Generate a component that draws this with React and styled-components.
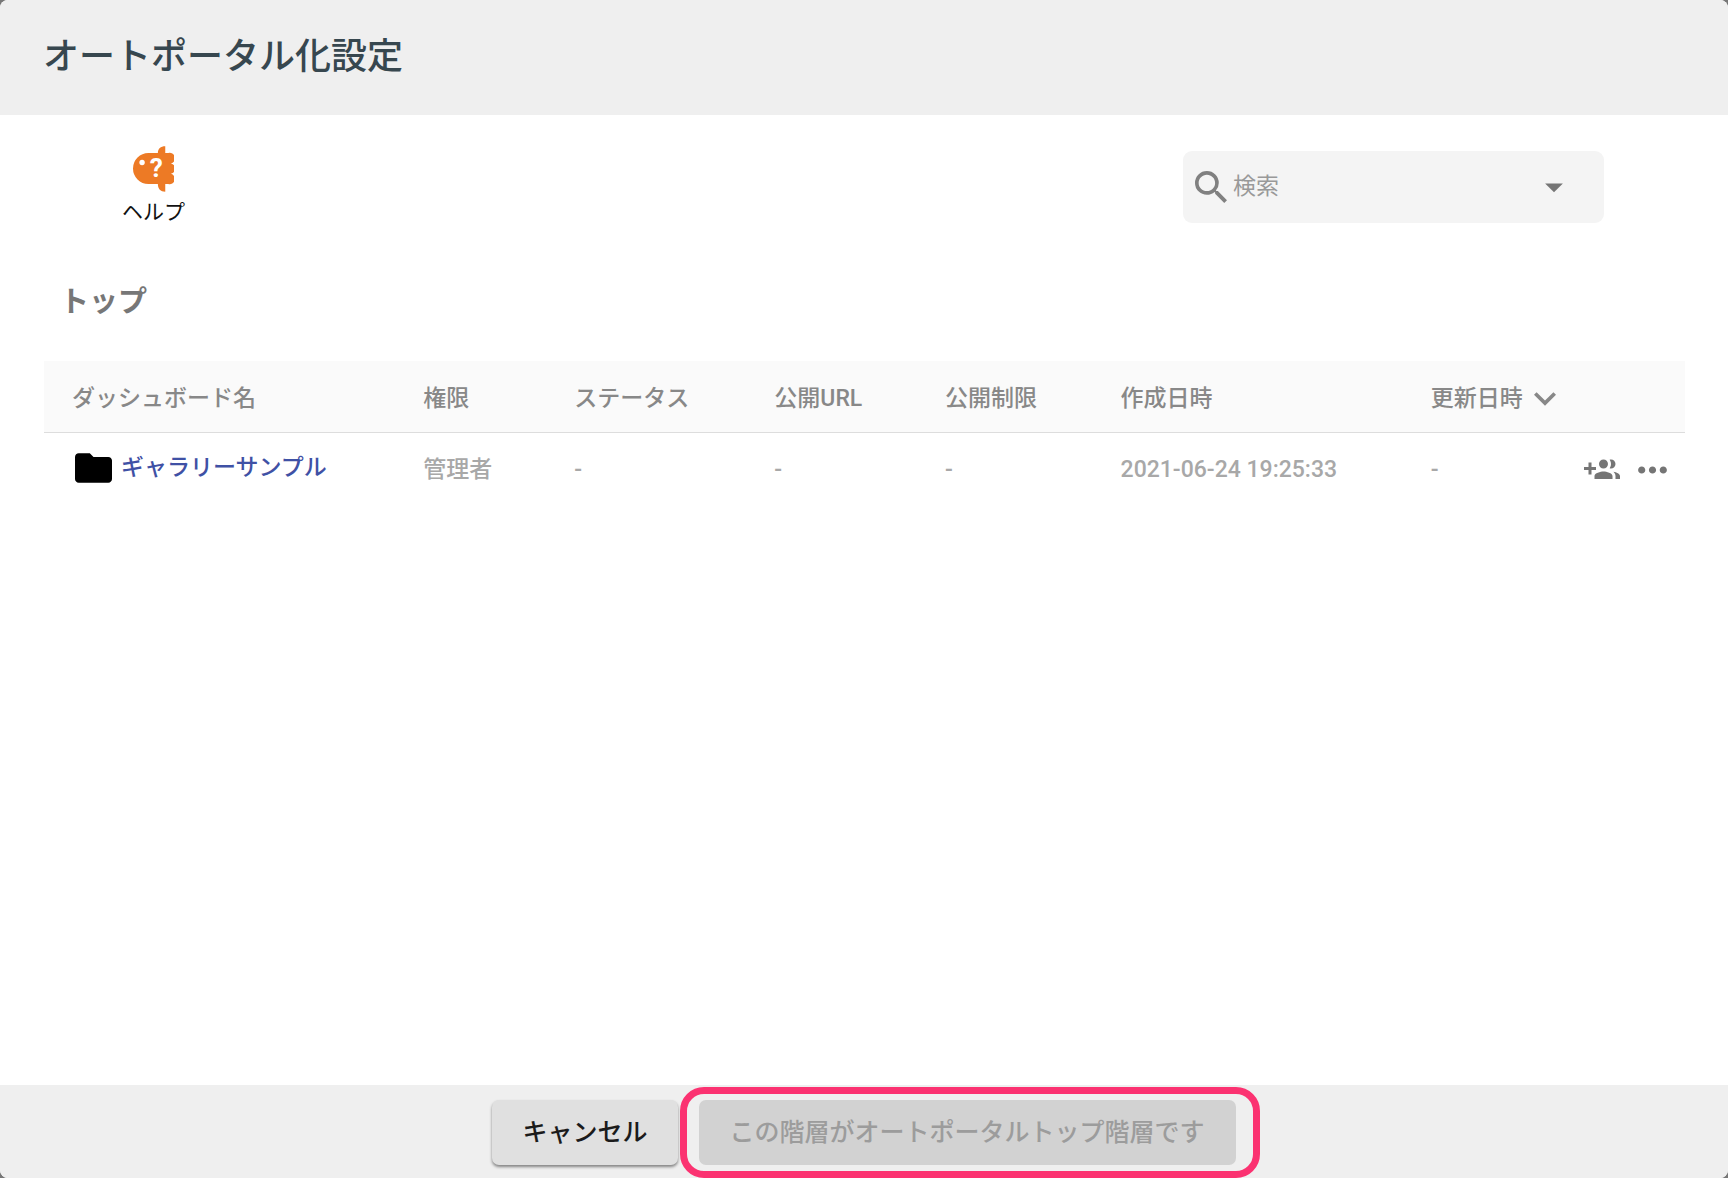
import React from "react";
import styled, { createGlobalStyle } from "styled-components";

const GlobalStyle = createGlobalStyle`
  *, *::before, *::after { box-sizing: border-box; }
  body {
    margin: 0;
    background: #777;
    font-family: Roboto, "Noto Sans CJK JP", sans-serif;
  }
  button, input { font: inherit; }
`;

const Dialog = styled.div`
  display: flex;
  flex-direction: column;
  min-height: 100vh;
  overflow: hidden;
  border-radius: 8px;
  background: #fff;
`;

const Header = styled.header`
  padding: 33px 43px 34px;
  background: #efefef;
`;

const Title = styled.h1`
  margin: 0;
  color: #37474f;
  font-size: 36px;
  font-weight: 500;
  line-height: 48px;
`;

const Content = styled.main`
  flex: 1;
  padding: 31px 43px 31px 44px;
`;

const Toolbar = styled.div`
  display: flex;
  align-items: flex-start;
  justify-content: space-between;
  padding: 0 81px 0 78px;
`;

const HelpLink = styled.a`
  display: flex;
  flex-direction: column;
  align-items: center;
  gap: 4px;
  color: #111;
  font-size: 21px;
  line-height: 32px;
  text-decoration: none;
`;

const SearchBox = styled.div`
  display: flex;
  align-items: center;
  width: 421px;
  height: 72px;
  margin-top: 5px;
  padding: 0 34px 0 12px;
  border-radius: 9px;
  background: #f4f4f4;
  color: #808080;
`;

const SearchLabel = styled.label`
  display: flex;
  flex: 1;
  align-items: center;
  gap: 6px;
  min-width: 0;
`;

const SearchInput = styled.input`
  flex: 1;
  min-width: 0;
  padding: 0;
  border: 0;
  outline: 0;
  background: none;
  color: #555;
  font-size: 23px;
  line-height: 32px;
  &::placeholder { color: #999; opacity: 1; }
`;

const IconButton = styled.button`
  display: inline-flex;
  align-items: center;
  justify-content: center;
  padding: 0;
  border: 0;
  background: none;
  color: ${(p) => p.$color || "#757575"};
  cursor: pointer;
`;

const Icon = styled.svg`
  display: block;
  flex: none;
  fill: currentColor;
`;

const Breadcrumb = styled.h2`
  margin: 56px 0 41px;
  padding: 0 16px;
  color: #777;
  font-size: 29px;
  font-weight: 700;
  line-height: 36px;
`;

const Table = styled.table`
  width: 100%;
  border-collapse: collapse;
  table-layout: fixed;
  font-size: 23px;
  font-weight: 500;
  line-height: 32px;
  text-align: left;
`;

const Col = styled.col`
  width: ${(p) => p.$width};
`;

const HeadCell = styled.th`
  height: 71px;
  padding: 6px 0 0 28px;
  border-bottom: 1px solid #ddd;
  background: #fafafa;
  color: #888;
  font-weight: 500;
  white-space: nowrap;
`;

const Cell = styled.td`
  height: 76px;
  padding: 0 0 0 28px;
  color: #a8a8a8;
  white-space: nowrap;
`;

const SortButton = styled(IconButton)`
  gap: 11px;
`;

const FolderLink = styled.a`
  display: flex;
  align-items: center;
  gap: 9px;
  padding: 0 0 4px 3px;
  color: #3f51a5;
  text-decoration: none;
`;

const Actions = styled.div`
  display: flex;
  justify-content: flex-end;
  gap: 18px;
  padding-right: 18px;
`;

const Footer = styled.footer`
  display: flex;
  justify-content: center;
  gap: 21px;
  padding: 15px 16px 13px;
  background: #efefef;
`;

const Button = styled.button`
  height: 65px;
  padding: 0 ${(p) => (p.$wide ? "31px" : "30px")};
  border: 0;
  border-radius: 7px;
  background: #e0e0e0;
  color: #1b1b1b;
  font-size: 25px;
  font-weight: 500;
  line-height: 36px;
  box-shadow: 0 2px 3px rgba(0, 0, 0, 0.45);
  cursor: pointer;
  &:disabled {
    background: #d2d2d2;
    color: #9c9c9c;
    box-shadow: none;
    cursor: default;
  }
`;

const Highlight = styled.div`
  position: relative;
  &::after {
    content: "";
    position: absolute;
    inset: -13px -24px -13px -19px;
    border: 7px solid #fb3271;
    border-radius: 24px;
    pointer-events: none;
  }
`;

const columns = [
  { label: "ダッシュボード名", width: "21.4%" },
  { label: "権限", width: "9.2%" },
  { label: "ステータス", width: "12.2%" },
  { label: "公開URL", width: "10.4%" },
  { label: "公開制限", width: "10.7%" },
  { label: "作成日時", width: "18.9%" },
];

const rows = [
  {
    name: "ギャラリーサンプル",
    role: "管理者",
    status: "-",
    url: "-",
    limit: "-",
    created: "2021-06-24 19:25:33",
    updated: "-",
  },
];

function HelpFish() {
  return (
    <Icon width="41" height="46" viewBox="0 0 122 135" aria-hidden="true">
      <path
        fill="#ed7a25"
        d="M46 20H74C74 8 82 0 96 0V20H105A15.500 15.500 0 0 1 113 51A16 16 0 0 1 113 82A15.500 15.500 0 0 1 105 112H96V135C82 135 74 126 74 112H46A46 46 0 0 1 46 20Z"
      />
      <circle cx="27" cy="48" r="8" fill="#fff" />
      <text x="69" y="92" fill="#fff" fontFamily="Roboto, sans-serif" fontSize="78" fontWeight="700" textAnchor="middle">
        ?
      </text>
    </Icon>
  );
}

export default function App() {
  return (
    <>
      <GlobalStyle />
      <Dialog role="dialog" aria-labelledby="dialog-title">
        <Header>
          <Title id="dialog-title">オートポータル化設定</Title>
        </Header>
        <Content>
          <Toolbar>
            <HelpLink href="#help">
              <HelpFish />
              ヘルプ
            </HelpLink>
            <SearchBox>
              <SearchLabel>
                <Icon width="32" height="32" viewBox="3 3 17.500 17.500" aria-hidden="true">
                  <path d="M15.500 14h-.79l-.28-.27A6.471 6.471 0 0 0 16 9.500 6.500 6.500 0 1 0 9.500 16c1.610 0 3.090-.59 4.230-1.570l.27.28v.79l5 4.990L20.490 19l-4.990-5zm-6 0C7.010 14 5 11.990 5 9.500S7.010 5 9.500 5 14 7.010 14 9.500 11.990 14 9.500 14z" />
                </Icon>
                <SearchInput type="text" placeholder="検索" aria-label="検索" />
              </SearchLabel>
              <IconButton type="button" aria-label="検索オプション">
                <Icon width="32" height="32" viewBox="3 3 18 18" aria-hidden="true">
                  <path d="M7 10l5 5 5-5z" />
                </Icon>
              </IconButton>
            </SearchBox>
          </Toolbar>
          <Breadcrumb>トップ</Breadcrumb>
          <Table>
            <colgroup>
              {columns.map((c) => (
                <Col key={c.label} $width={c.width} />
              ))}
              <Col $width="9%" />
              <Col />
            </colgroup>
            <thead>
              <tr>
                {columns.map((c) => (
                  <HeadCell key={c.label} scope="col">{c.label}</HeadCell>
                ))}
                <HeadCell scope="col" aria-sort="descending">
                  <SortButton type="button" $color="#888">
                    更新日時
                    <Icon width="22" height="14" viewBox="6 8.500 12 7.600" aria-hidden="true">
                      <path d="M16.590 8.590L12 13.170 7.410 8.590 6 10l6 6 6-6z" />
                    </Icon>
                  </SortButton>
                </HeadCell>
                <HeadCell as="td" />
              </tr>
            </thead>
            <tbody>
              {rows.map((r) => (
                <tr key={r.name}>
                  <Cell>
                    <FolderLink href="#folder">
                      <Icon width="37" height="30" viewBox="2 4 20 16" aria-hidden="true">
                        <path fill="#000" d="M10 4H4c-1.100 0-1.990.9-1.990 2L2 18c0 1.100.9 2 2 2h16c1.100 0 2-.9 2-2V8c0-1.100-.9-2-2-2h-8l-2-2z" />
                      </Icon>
                      {r.name}
                    </FolderLink>
                  </Cell>
                  <Cell>{r.role}</Cell>
                  <Cell>{r.status}</Cell>
                  <Cell>{r.url}</Cell>
                  <Cell>{r.limit}</Cell>
                  <Cell>{r.created}</Cell>
                  <Cell>{r.updated}</Cell>
                  <Cell>
                    <Actions>
                      <IconButton type="button" aria-label="共有">
                        <Icon width="36" height="36" viewBox="0 0 24 24" aria-hidden="true">
                          <path d="M8 10H5V7H3v3H0v2h3v3h2v-3h3v-2zm10 1c1.660 0 2.990-1.340 2.990-3S19.660 5 18 5c-.32 0-.63.05-.91.14.57.81.9 1.790.9 2.860s-.34 2.040-.9 2.860c.28.09.59.14.91.14zm-5 0c1.660 0 2.990-1.340 2.990-3S14.660 5 13 5c-1.660 0-3 1.340-3 3s1.340 3 3 3zm6.620 2.160c.83.73 1.380 1.660 1.380 2.840v2h3v-2c0-1.540-2.370-2.490-4.380-2.840zM13 13c-2 0-6 1-6 3v2h12v-2c0-2-4-3-6-3z" />
                        </Icon>
                      </IconButton>
                      <IconButton type="button" aria-label="メニュー">
                        <Icon width="29" height="36" viewBox="4 2 16 20" aria-hidden="true">
                          <path d="M6 10c-1.100 0-2 .9-2 2s.9 2 2 2 2-.9 2-2-.9-2-2-2zm12 0c-1.100 0-2 .9-2 2s.9 2 2 2 2-.9 2-2-.9-2-2-2zm-6 0c-1.100 0-2 .9-2 2s.9 2 2 2 2-.9 2-2-.9-2-2-2z" />
                        </Icon>
                      </IconButton>
                    </Actions>
                  </Cell>
                </tr>
              ))}
            </tbody>
          </Table>
        </Content>
        <Footer>
          <Button type="button">キャンセル</Button>
          <Highlight>
            <Button type="button" $wide disabled>この階層がオートポータルトップ階層です</Button>
          </Highlight>
        </Footer>
      </Dialog>
    </>
  );
}
